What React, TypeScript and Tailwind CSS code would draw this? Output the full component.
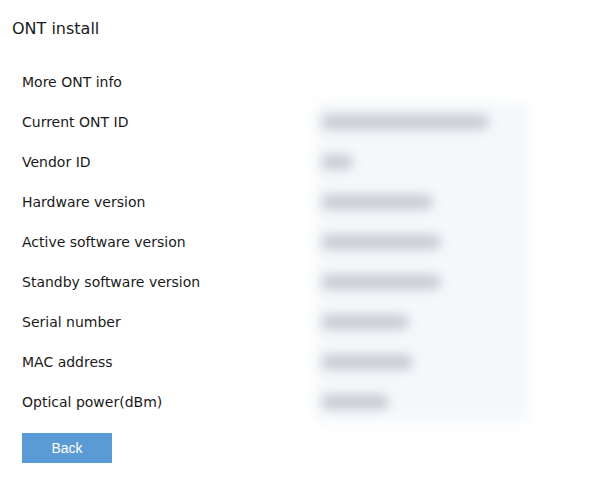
const rows: { label: string; bar?: number }[] = [
  { label: "More ONT info" },
  { label: "Current ONT ID", bar: 166 },
  { label: "Vendor ID", bar: 30 },
  { label: "Hardware version", bar: 110 },
  { label: "Active software version", bar: 118 },
  { label: "Standby software version", bar: 118 },
  { label: "Serial number", bar: 86 },
  { label: "MAC address", bar: 90 },
  { label: "Optical power(dBm)", bar: 66 },
];

export default function App() {
  return (
    <div className="min-h-[483px] w-[599px] bg-white px-3 pt-4 text-[#1a1a1a] font-['DejaVu_Sans',Verdana,sans-serif]">
      <h1 className="text-[16px] leading-6 pt-px">ONT install</h1>

      <div className="mt-[21px] flex pl-[10px]">
        {/* Labels */}
        <div className="w-[293px] flex flex-col">
          {rows.map((r) => (
            <div key={r.label} className="h-10 flex items-center text-[14px]">
              {r.label}
            </div>
          ))}
        </div>

        {/* Values (blurred) */}
        <div className="flex flex-col">
          <div className="h-10" />
          <div className="w-[215px] bg-[#f5f8fb] pl-[7px] [filter:blur(6px)]">
            {rows.slice(1).map((r) => (
              <div key={r.label} className="h-10 flex items-center">
                <div
                  className="h-[14px] rounded bg-[#c4c9d0]"
                  style={{ width: r.bar }}
                />
              </div>
            ))}
          </div>
        </div>
      </div>

      <div className="mt-[11px] pl-[10px]">
        <button className="h-[30px] w-[90px] bg-[#5b9bd5] text-white text-[14px] font-['Liberation_Sans',Arial,sans-serif]">
          Back
        </button>
      </div>
    </div>
  );
}
